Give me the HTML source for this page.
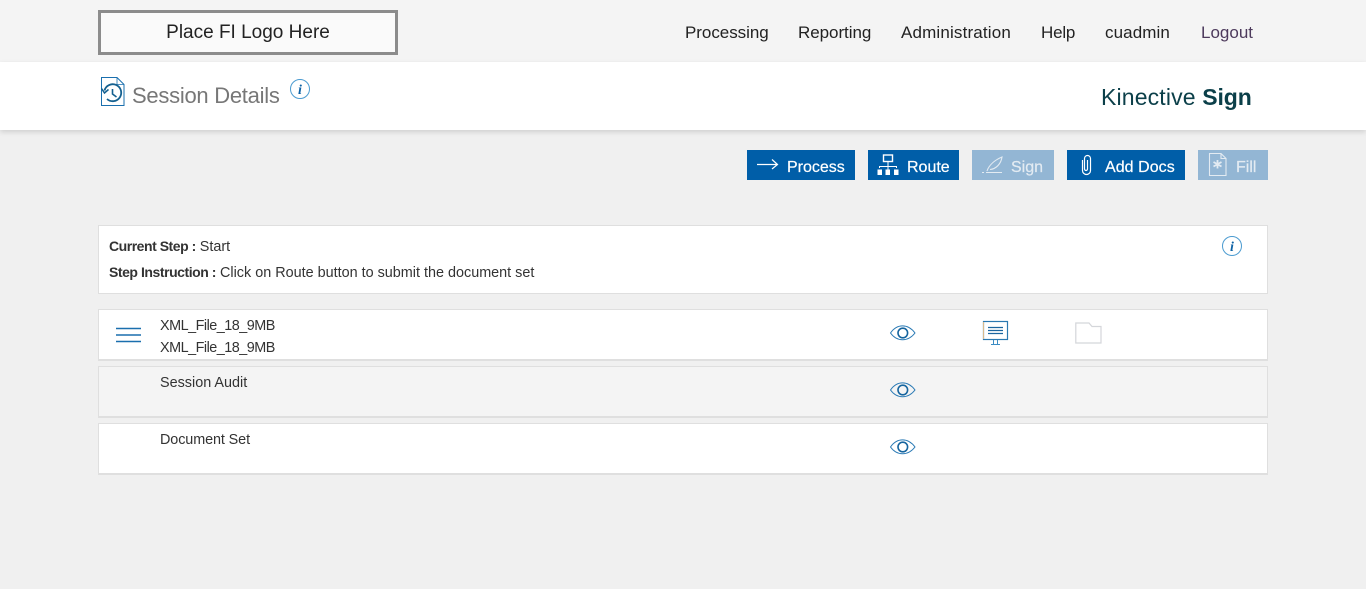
<!DOCTYPE html>
<html><head><meta charset="utf-8"><style>
html,body{margin:0;padding:0;width:1366px;height:589px;overflow:hidden;background:#f0f0f0;font-family:"Liberation Sans",sans-serif;color:#2b2b2b}
.a{position:absolute;white-space:nowrap}
.box{position:absolute;box-sizing:border-box;border:1px solid #dfdfdf;left:98px;width:1170px}
.t{position:absolute;white-space:nowrap;line-height:20px}
.nav{font-size:17px;line-height:20px;top:23px;color:#222}
.btn{position:absolute;top:150px;height:30px;background:#005ea8}
.btn.off{background:#93b6d4}
.btn span{position:absolute;top:8px;font-size:16px;line-height:20px;color:#fff;white-space:nowrap}
.btn.off span{color:#e3ebf2}
.row{font-size:14.4px;color:#333;left:160px}
svg{position:absolute;overflow:visible}
</style></head><body>
<div class="a" style="left:0;top:0;width:1366px;height:62px;background:#f4f4f4"></div>
<div class="a" style="left:0;top:62px;width:1366px;height:68px;background:#fff;box-shadow:0 2px 5px rgba(0,0,0,.14)"></div>

<div class="a" style="left:98px;top:10px;width:300px;height:45px;box-sizing:border-box;border:3px solid #8c8c8c;background:#fafafa;text-align:center;font-size:19px;line-height:40px;color:#222">Place FI Logo Here</div>

<div class="t nav" style="left:685px;letter-spacing:-.04px">Processing</div>
<div class="t nav" style="left:798px;letter-spacing:-.05px">Reporting</div>
<div class="t nav" style="left:901px;letter-spacing:.16px">Administration</div>
<div class="t nav" style="left:1041px;letter-spacing:-.2px">Help</div>
<div class="t nav" style="left:1105px;letter-spacing:.1px">cuadmin</div>
<div class="t nav" style="left:1201px;color:#4d3a5c">Logout</div>

<svg style="left:101px;top:77px" width="24" height="30" viewBox="0 0 24 30" fill="none" stroke="#1a6fae" stroke-width="1">
<path d="M.5 .5H16L23 7.500V28.500H.5Z"/><path d="M16 .5V7.500H23" stroke-width=".8"/>
<path d="M3.500 13.500A8.500 8.500 0 1 1 6 22" stroke-width="1.800" stroke="#14608f"/><path d="M.5 11.500L3.500 16L7.500 12.500" stroke-width="1.500" stroke="#14608f"/><path d="M11.500 12V17L15.500 20" stroke-width="1.600" stroke="#14608f"/>
</svg>
<div class="t" style="left:132px;top:83px;font-size:22px;line-height:26px;color:#777;letter-spacing:-.27px">Session Details</div>
<svg style="left:290px;top:79px" width="20" height="20"><circle cx="10" cy="10" r="9.500" fill="#fff" stroke="#4b9bd0"/><text x="10" y="15" text-anchor="middle" font-family="Liberation Serif" font-style="italic" font-weight="bold" font-size="14" fill="#0d62a5">i</text></svg>

<div class="t" style="left:1101px;top:84px;font-size:23px;line-height:26px;color:#0b3f49;letter-spacing:.15px">Kinective <b style="letter-spacing:-.1px">Sign</b></div>

<div class="btn" style="left:747px;width:108px"><svg style="left:10px;top:8px" width="22" height="12" fill="none" stroke="#fff" stroke-width="1.200"><path d="M0 6.500H20M15 1.500L20.500 6.500L15 11"/></svg><span style="left:40px;top:8px;letter-spacing:0;-webkit-text-stroke:.2px #fff">Process</span></div>
<div class="btn" style="left:868px;width:91px"><svg style="left:9px;top:4px" width="22" height="22" fill="none" stroke="#fff"><rect x="6.500" y="1" width="9" height="6.500" stroke-width="1.400"/><path d="M11 8V17M2.500 14V12.500H19.500V14"/><rect x="1" y="16" width="3.500" height="4.500" fill="#fff"/><rect x="9" y="16" width="3.500" height="4.500" fill="#fff"/><rect x="17.500" y="16" width="3.500" height="4.500" fill="#fff"/></svg><span style="left:39px;-webkit-text-stroke:.2px #fff">Route</span></div>
<div class="btn off" style="left:972px;width:82px"><svg style="left:10px;top:5px" width="22" height="20" fill="none" stroke="#e3ebf2" stroke-width="1.100"><path d="M0 17.500H20" stroke-dasharray="2 2 16"/><path d="M5 16C7 10 13 5 20 2C19 9 14 14 8 14.500"/></svg><span style="left:39px;-webkit-text-stroke:.2px #e3ebf2">Sign</span></div>
<div class="btn" style="left:1067px;width:118px"><svg style="left:15px;top:4px" width="10" height="21" fill="none" stroke="#fff" stroke-width="1.200"><path d="M5.500 6V15A1.500 1.500 0 0 1 2.500 15V4.500A3 3 0 0 1 8.500 4.500V16.500A4 4 0 0 1 .5 16.500V6"/></svg><span style="left:38px;letter-spacing:.05px;-webkit-text-stroke:.2px #fff">Add Docs</span></div>
<div class="btn off" style="left:1198px;width:70px"><svg style="left:11px;top:3px" width="18" height="24" fill="none" stroke="#e3ebf2" stroke-width="1.100"><path d="M.5 .5H12L17 5.500V22.500H.5ZM12 .5V5.500H17"/><path d="M8.500 7V15.500M4.500 9L12.500 13.500M12.500 9L4.500 13.500" stroke-width="1.800"/></svg><span style="left:38px;-webkit-text-stroke:.2px #e3ebf2">Fill</span></div>

<div class="box" style="top:225px;height:69px;background:#fff"></div>
<div class="t" style="left:109px;top:236px;font-size:14.4px;color:#333"><b style="font-size:14px;letter-spacing:-.47px">Current Step :</b> Start</div>
<div class="t" style="left:109px;top:262px;font-size:14.4px;color:#333"><b style="font-size:14px;letter-spacing:-.45px">Step Instruction :</b> Click on Route button to submit the document set</div>
<svg style="left:1222px;top:236px" width="20" height="20"><circle cx="10" cy="10" r="9.500" fill="#fff" stroke="#4b9bd0"/><text x="10" y="15" text-anchor="middle" font-family="Liberation Serif" font-style="italic" font-weight="bold" font-size="14" fill="#0d62a5">i</text></svg>

<div class="box" style="top:309px;height:52px;background:#fff;border-bottom-width:2px"></div>
<div class="box" style="top:366px;height:52px;background:#f4f4f4;border-bottom-width:2px"></div>
<div class="box" style="top:423px;height:52px;background:#fff;border-bottom-width:2px"></div>

<svg style="left:116px;top:327px" width="26" height="16" fill="none" stroke="#1a6fae" stroke-width="1.500"><path d="M0 1.500H25M0 8H25M0 14.500H25"/></svg>
<div class="t row" style="top:316px;letter-spacing:-.5px">XML_File_18_9MB</div>
<div class="t row" style="top:338px;letter-spacing:-.5px">XML_File_18_9MB</div>
<div class="t row" style="top:373px">Session Audit</div>
<div class="t row" style="top:430px;letter-spacing:-.1px">Document Set</div>

<svg style="left:890px;top:325px" width="26" height="16" fill="none" stroke="#2a7ab5"><path d="M.5 8C7 -1.500 18 -1.500 25 8C18 17 7 17 .5 8Z"/><circle cx="12.800" cy="8" r="4.800" stroke-width="1.600" stroke="#16659f"/></svg>
<svg style="left:890px;top:382px" width="26" height="16" fill="none" stroke="#2a7ab5"><path d="M.5 8C7 -1.500 18 -1.500 25 8C18 17 7 17 .5 8Z"/><circle cx="12.800" cy="8" r="4.800" stroke-width="1.600" stroke="#16659f"/></svg>
<svg style="left:890px;top:439px" width="26" height="16" fill="none" stroke="#2a7ab5"><path d="M.5 8C7 -1.500 18 -1.500 25 8C18 17 7 17 .5 8Z"/><circle cx="12.800" cy="8" r="4.800" stroke-width="1.600" stroke="#16659f"/></svg>

<svg style="left:983px;top:321px" width="26" height="25" fill="none"><rect x=".5" y=".5" width="24" height="18" stroke="#2a78b0" stroke-width="1.200"/><path d="M.5 1V18" stroke="#d9b98a"/><path d="M5 6.500H20M5 9.500H20M5 12.500H20" stroke="#1b659f" stroke-width="1.300"/><path d="M10.500 19V23.500M14.500 19V23.500M8 23.500H17" stroke="#3b8cc4"/></svg>
<svg style="left:1075px;top:322px" width="27" height="22" fill="none" stroke="#d4d6da" stroke-width="1.200"><path d="M.8 21V1H14L17 4.500H26V21Z"/></svg>
</body></html>
